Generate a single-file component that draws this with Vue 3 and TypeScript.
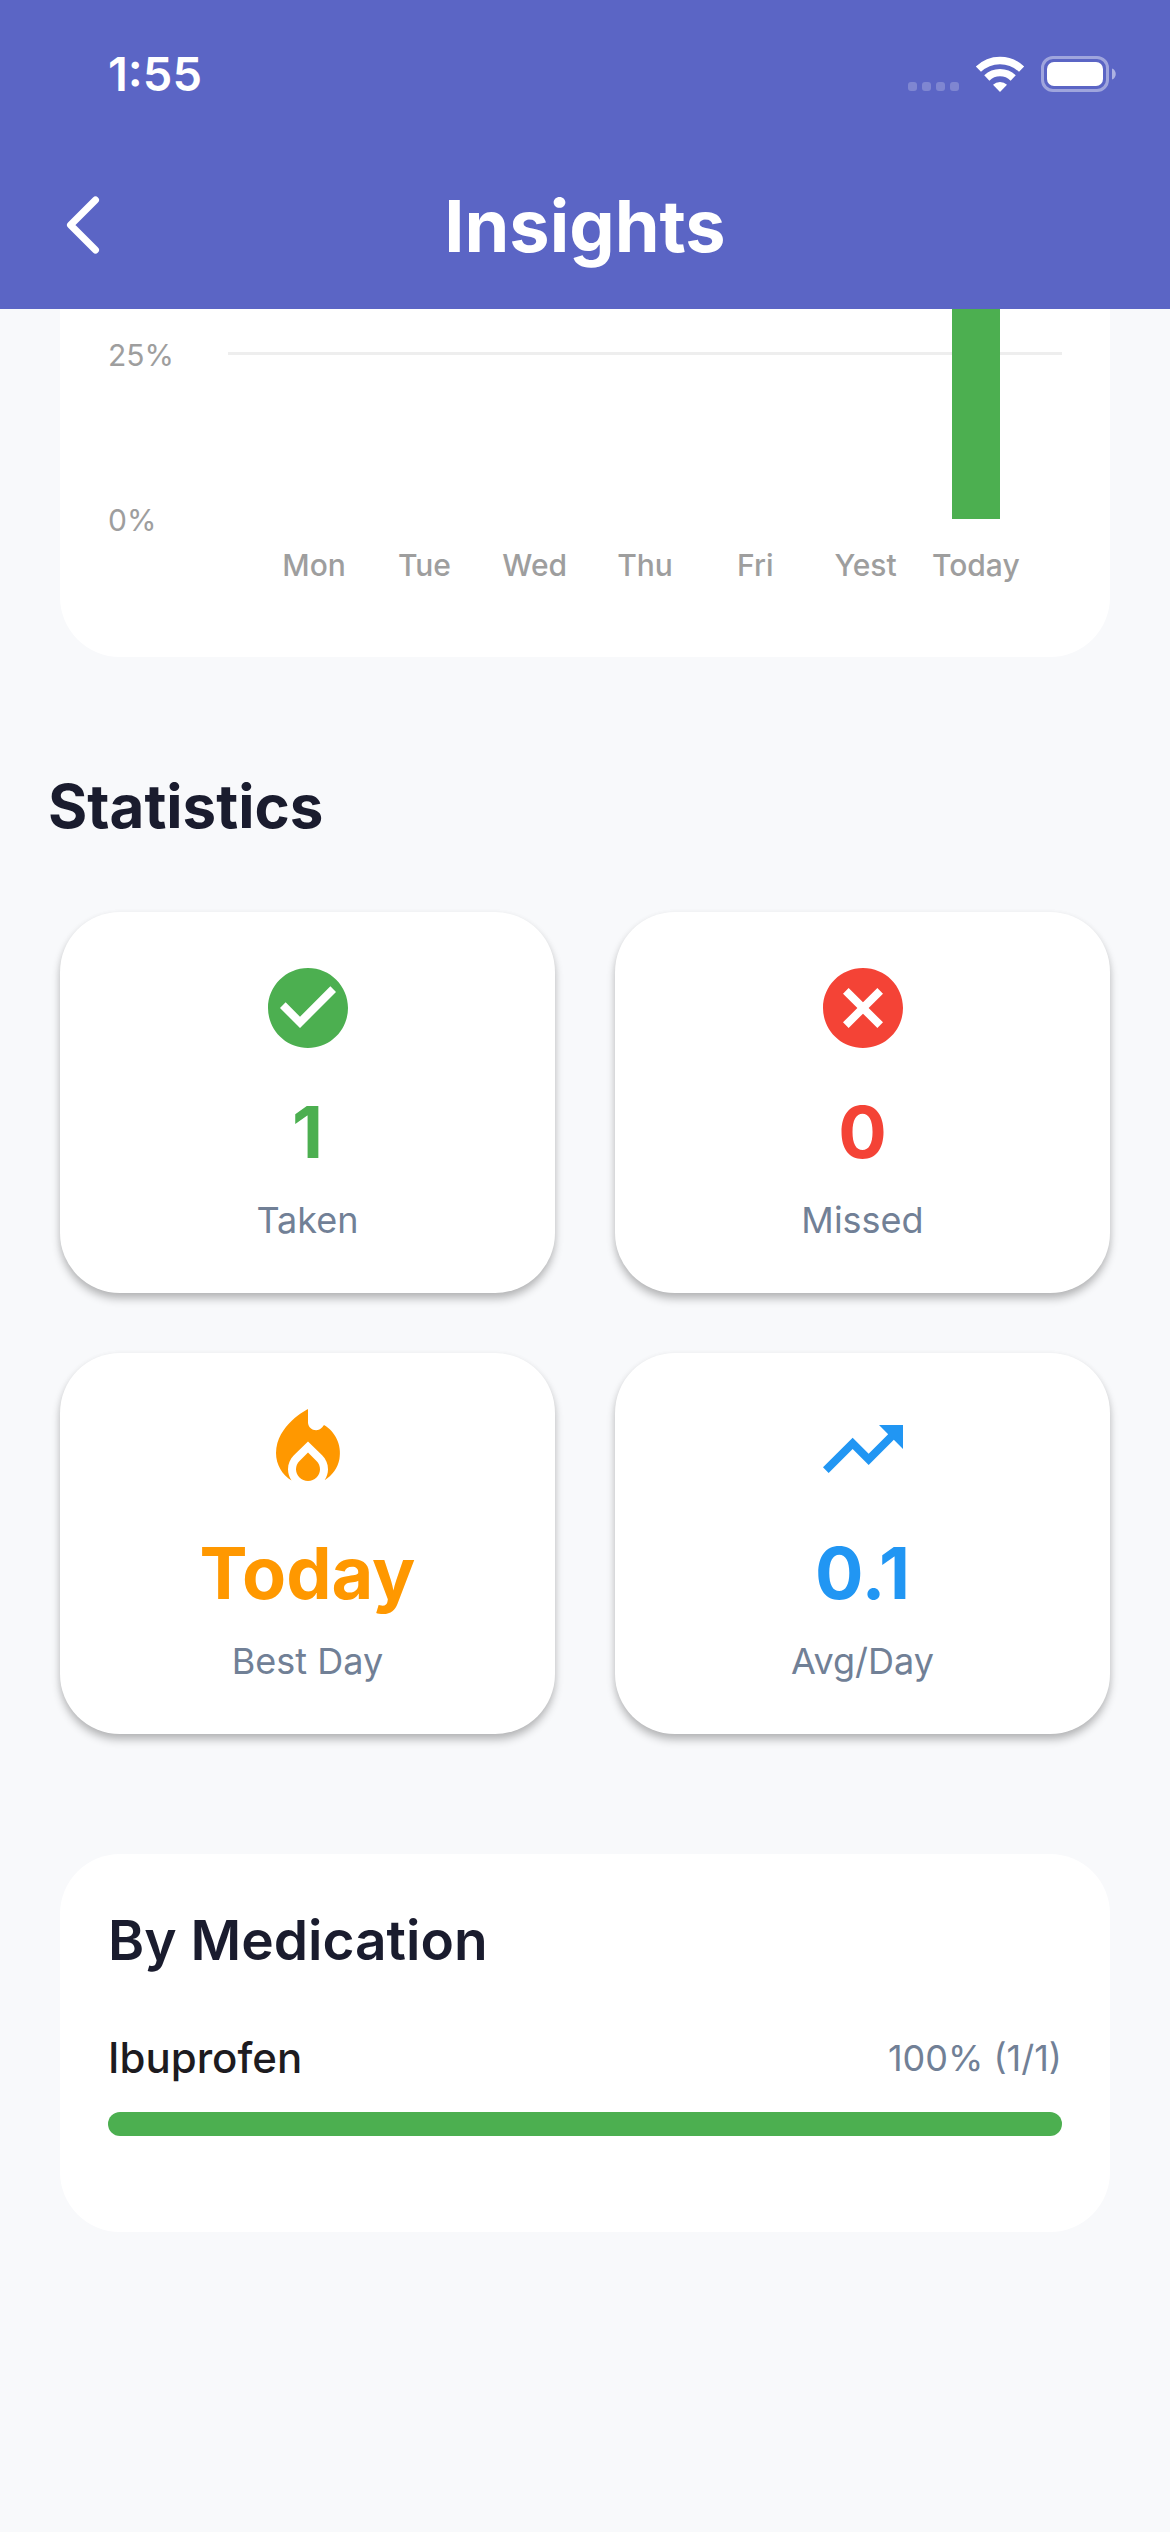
<script setup lang="ts">
interface Day {
  label: string
  percent: number
}

interface Stat {
  label: string
  value: string
  tone: string
  paths: string[]
}

interface Medication {
  name: string
  taken: number
  total: number
}

/* Height in pixels of one percent on the chart scale */
const PERCENT_HEIGHT = 6.6

const days: Day[] = [
  { label: 'Mon', percent: 0 },
  { label: 'Tue', percent: 0 },
  { label: 'Wed', percent: 0 },
  { label: 'Thu', percent: 0 },
  { label: 'Fri', percent: 0 },
  { label: 'Yest', percent: 0 },
  { label: 'Today', percent: 100 },
]

const stats: Stat[] = [
  {
    label: 'Taken',
    value: '1',
    tone: 'green',
    paths: [
      'M12 2C6.48 2 2 6.48 2 12s4.48 10 10 10 10-4.48 10-10S17.52 2 12 2zm-2 15l-5-5 1.41-1.41L10 14.17l7.59-7.59L19 8l-9 9z',
    ],
  },
  {
    label: 'Missed',
    value: '0',
    tone: 'red',
    paths: [
      'M12 2C6.47 2 2 6.47 2 12s4.47 10 10 10 10-4.47 10-10S17.53 2 12 2zm5 13.59L15.59 17 12 13.41 8.41 17 7 15.59 10.59 12 7 8.41 8.41 7 12 10.59 15.59 7 17 8.41 13.41 12 17 15.59z',
    ],
  },
  {
    label: 'Best Day',
    value: 'Today',
    tone: 'orange',
    paths: [
      'M12 12.9l-2.13 2.09C9.31 15.55 9 16.28 9 17.06 9 18.68 10.35 20 12 20s3-1.32 3-2.94c0-.78-.31-1.52-.87-2.07L12 12.9z',
      'M16 6l-.44.55C14.38 8.02 12 7.19 12 5.3V2S4 6 4 13c0 2.92 1.56 5.47 3.89 6.86C7.33 19.07 7 18.1 7 17.06c0-1.32.52-2.56 1.47-3.5L12 10.1l3.53 3.47c.95.93 1.47 2.17 1.47 3.5 0 1.02-.31 1.96-.85 2.75 1.89-1.15 3.29-3.06 3.71-5.3C20.52 10.97 18.79 7.62 16 6z',
    ],
  },
  {
    label: 'Avg/Day',
    value: '0.1',
    tone: 'blue',
    paths: ['M16 6l2.29 2.29-4.88 4.88-4-4L2 16.59 3.41 18l6-6 4 4 6.3-6.29L22 12V6z'],
  },
]

const medications: Medication[] = [{ name: 'Ibuprofen', taken: 1, total: 1 }]

const rate = (m: Medication): number => Math.round((m.taken / m.total) * 100)
</script>

<template>
  <div class="page">
    <header class="header">
      <div class="status">
        <span class="time">1:55</span>
        <div class="indicators">
          <svg width="51" height="36" viewBox="0 0 51 36" aria-hidden="true">
            <g fill="#fff" fill-opacity="0.22">
              <rect x="0" y="26" width="9" height="9" rx="3" />
              <rect x="14" y="26" width="9" height="9" rx="3" />
              <rect x="28" y="26" width="9" height="9" rx="3" />
              <rect x="42" y="26" width="9" height="9" rx="3" />
            </g>
          </svg>
          <svg width="50" height="36" viewBox="0 0 50 36" aria-hidden="true">
            <g fill="none" stroke="#fff" stroke-width="7.4">
              <path d="M3.4 13.2A31 31 0 0 1 46.6 13.2" />
              <path d="M11.8 22A19 19 0 0 1 38.2 22" />
            </g>
            <path d="M25 36l-7-7.2a10 10 0 0 1 14 0z" fill="#fff" />
          </svg>
          <svg width="75" height="36" viewBox="0 0 75 36" aria-hidden="true">
            <rect x="1.5" y="1.5" width="65" height="33" rx="10.5" fill="none" stroke="#fff" stroke-opacity="0.42" stroke-width="3" />
            <rect x="6" y="6" width="56" height="24" rx="7" fill="#fff" />
            <path d="M71 12.500c5 1.500 5 9.500 0 11z" fill="#fff" fill-opacity="0.5" />
          </svg>
        </div>
      </div>
      <div class="appbar">
        <button class="back" type="button" aria-label="Back">
          <svg width="34" height="58" viewBox="0 0 34 58" aria-hidden="true">
            <path d="M29.500 4L4.500 29l25 25" fill="none" stroke="#fff" stroke-width="7" stroke-linecap="round" stroke-linejoin="round" />
          </svg>
        </button>
        <h1 class="title">Insights</h1>
      </div>
    </header>

    <main class="content">
      <section class="card chart" aria-label="Weekly adherence">
        <div class="axis">
          <span>25%</span>
          <span>0%</span>
        </div>
        <div class="plot-area">
          <div class="plot">
            <div class="gridline"></div>
            <div class="bars">
              <div v-for="d in days" :key="d.label" class="slot">
                <div class="bar" :style="{ height: d.percent * PERCENT_HEIGHT + 'px' }"></div>
              </div>
            </div>
          </div>
          <div class="days">
            <span v-for="d in days" :key="d.label">{{ d.label }}</span>
          </div>
        </div>
      </section>

      <h2 class="heading">Statistics</h2>

      <section class="stats">
        <article v-for="s in stats" :key="s.label" class="stat" :class="s.tone">
          <svg class="stat-icon" viewBox="0 0 24 24" aria-hidden="true">
            <path v-for="p in s.paths" :key="p" :d="p" fill="currentColor" />
          </svg>
          <strong class="stat-value">{{ s.value }}</strong>
          <span class="stat-label">{{ s.label }}</span>
        </article>
      </section>

      <section class="card meds">
        <h2 class="meds-title">By Medication</h2>
        <div v-for="m in medications" :key="m.name" class="med">
          <div class="med-row">
            <span class="med-name">{{ m.name }}</span>
            <span class="med-rate">{{ rate(m) }}% ({{ m.taken }}/{{ m.total }})</span>
          </div>
          <div class="track" role="progressbar" :aria-label="m.name" :aria-valuenow="rate(m)" aria-valuemin="0" aria-valuemax="100">
            <div class="fill" :style="{ width: rate(m) + '%' }"></div>
          </div>
        </div>
      </section>
    </main>
  </div>
</template>

<style>
body {
  margin: 0;
  background: #f8f9fb;
}
</style>

<style scoped>
.page {
  min-height: 100vh;
  background: #f8f9fb;
  font-family: Inter, "Liberation Sans", sans-serif;
  color: #1a1c2e;
}

.header {
  background: #5b65c5;
  color: #fff;
}

.status {
  display: flex;
  align-items: center;
  justify-content: space-between;
  height: 147px;
  padding: 0 54px 0 108px;
}

.time {
  font-size: 47px;
  line-height: 56px;
  font-weight: 600;
}

.indicators {
  display: flex;
  align-items: center;
  gap: 16px;
}

.indicators svg,
.back svg,
.stat-icon {
  display: block;
}

.appbar {
  display: grid;
  grid-template-columns: 120px 1fr 120px;
  align-items: center;
  box-sizing: border-box;
  height: 162px;
  padding-bottom: 4px;
}

.back {
  justify-self: start;
  margin: 0 0 3px 66px;
  padding: 0;
  border: 0;
  background: none;
}

.title {
  margin: 0;
  text-align: center;
  font-size: 72px;
  line-height: 84px;
  font-weight: 700;
}

.content {
  padding: 0 60px 300px;
}

.card {
  background: #fff;
  border-radius: 60px;
}

.chart {
  display: grid;
  grid-template-columns: 120px 1fr;
  padding: 0 48px 70px;
  border-top-left-radius: 0;
  border-top-right-radius: 0;
  color: #9e9e9e;
  font-size: 30px;
  line-height: 44px;
}

.axis {
  display: flex;
  flex-direction: column;
  gap: 121px;
  padding-top: 24px;
}

.plot {
  display: grid;
  height: 210px;
  overflow: hidden;
}

.gridline,
.bars {
  grid-area: 1 / 1;
}

.gridline {
  height: 3px;
  margin-top: 43px;
  background: #eee;
}

.bars {
  display: flex;
  height: 210px;
  padding: 0 31px;
}

.slot {
  display: flex;
  flex: 1;
  align-items: flex-end;
  justify-content: center;
}

.bar {
  width: 48px;
  background: #4caf50;
}

.days {
  display: flex;
  margin-top: 24px;
  padding: 0 31px;
  font-weight: 500;
}

.days span {
  flex: 1 1 0;
  text-align: center;
}

.heading {
  margin: 107px 0 64px -12px;
  font-size: 60px;
  line-height: 84px;
  font-weight: 700;
}

.stats {
  display: grid;
  grid-template-columns: 1fr 1fr;
  gap: 60px;
}

.stat {
  display: flex;
  flex-direction: column;
  align-items: center;
  padding: 48px;
  border-radius: 60px;
  background: #fff;
  box-shadow: 0 6px 9px rgba(0, 0, 0, 0.24), 0 2px 6px rgba(0, 0, 0, 0.06);
}

.stat-icon {
  width: 96px;
  height: 96px;
}

.stat-value {
  margin: 31px 0 18px;
  font-size: 72px;
  line-height: 90px;
  font-weight: 700;
}

.stat-label {
  color: #718096;
  font-size: 36px;
  line-height: 50px;
}

.green {
  color: #4caf50;
}

.red {
  color: #f44336;
}

.orange {
  color: #ff9800;
}

.blue {
  color: #2196f3;
}

.meds {
  margin-top: 120px;
  padding: 48px 48px 96px;
}

.meds-title {
  margin: 0 0 50px;
  font-size: 55px;
  line-height: 76px;
  font-weight: 600;
}

.med-row {
  display: flex;
  align-items: center;
  justify-content: space-between;
  margin-bottom: 24px;
  line-height: 60px;
}

.med-name {
  color: #1d1b20;
  font-size: 42px;
  font-weight: 500;
}

.med-rate {
  color: #718096;
  font-size: 36px;
}

.track {
  height: 24px;
  overflow: hidden;
  border-radius: 12px;
  background: #e0e0e0;
}

.fill {
  height: 100%;
  background: #4caf50;
}
</style>
